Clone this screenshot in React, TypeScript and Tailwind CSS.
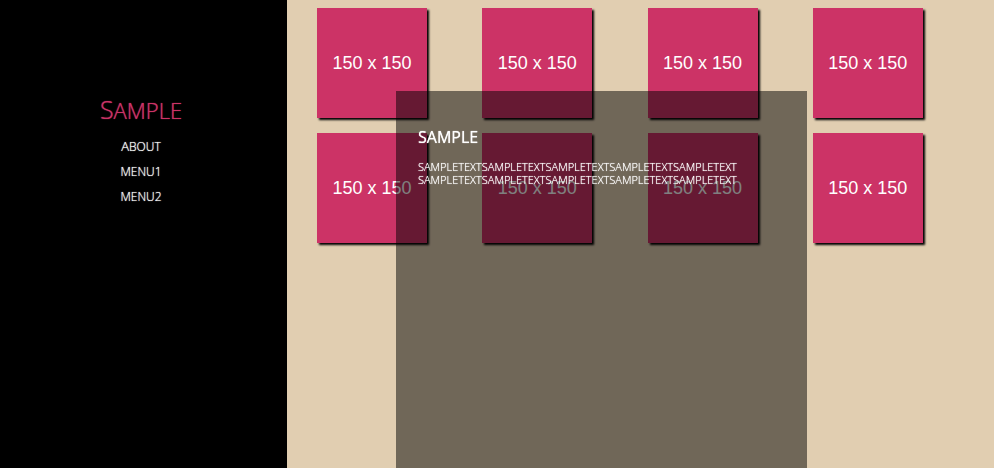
const tiles = Array.from({ length: 8 }, (_, i) => i);

const menu = [
  { initial: 'A', rest: 'BOUT' },
  { initial: '', rest: 'MENU1' },
  { initial: '', rest: 'MENU2' },
];

function Sidebar() {
  return (
    <aside className="w-[287px] shrink-0 bg-black pt-[93px] pr-[5px] text-center font-light text-white">
      <h1 className="text-[25px] leading-8 text-[#cc3366] text-shadow-[0_0_1px_#cc3366]">
        S<span className="text-[22px]">AMPLE</span>
      </h1>
      <nav className="mt-2">
        <ul>
          {menu.map((item) => (
            <li key={item.rest} className="h-[25px] text-[13px] leading-[25px] text-shadow-[0_0_1px_#fff]">
              <a href="#">
                {item.initial}
                <span className="text-[12px]">{item.rest}</span>
              </a>
            </li>
          ))}
        </ul>
      </nav>
    </aside>
  );
}

function Gallery() {
  return (
    <main className="grow pt-2 pr-4 pl-[30px]">
      <div className="grid grid-cols-4 gap-y-[15px]">
        {tiles.map((tile) => (
          <div
            key={tile}
            className="flex size-[110px] items-center justify-center bg-[#cc3366] font-['Liberation_Sans',Arial,sans-serif] text-[18px] text-white shadow-[2px_2px_2px_#000]"
          >
            150 x 150
          </div>
        ))}
      </div>
    </main>
  );
}

function InfoPanel() {
  return (
    <section className="fixed top-[91px] right-[187px] bottom-0 left-[396px] bg-black/50 px-[22px] pt-[34px] text-white">
      <h2 className="text-[16px] leading-6 font-medium text-shadow-[0_0_1px_#fff]">SAMPLE</h2>
      <p className="mt-[11px] text-[11px] leading-[13px] font-light text-shadow-[0_0_1px_#fff]">
        SAMPLETEXTSAMPLETEXTSAMPLETEXTSAMPLETEXTSAMPLETEXT
        <br />
        SAMPLETEXTSAMPLETEXTSAMPLETEXTSAMPLETEXTSAMPLETEXT
      </p>
    </section>
  );
}

export default function App() {
  return (
    <div className="flex min-h-screen bg-[#e1ceb1] font-['Open_Sans',sans-serif]">
      <Sidebar />
      <Gallery />
      <InfoPanel />
    </div>
  );
}
